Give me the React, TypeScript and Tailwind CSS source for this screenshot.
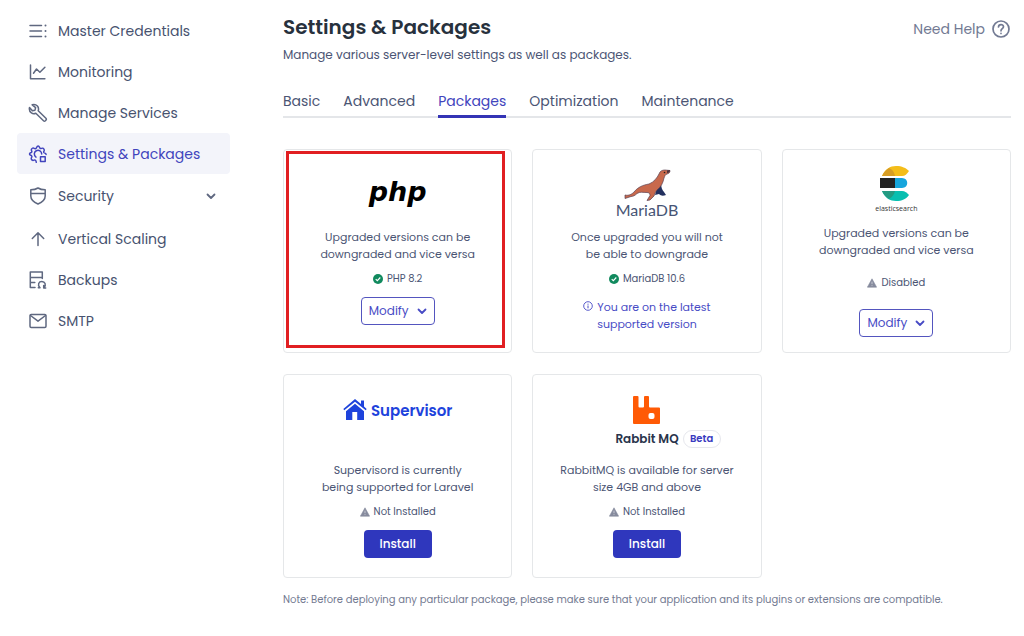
import type { ReactNode } from "react";
import clsx from "clsx";

const navItems = [
  { label: "Master Credentials", icon: <ListIcon /> },
  { label: "Monitoring", icon: <ChartIcon /> },
  { label: "Manage Services", icon: <WrenchIcon /> },
  { label: "Settings & Packages", icon: <GearIcon />, active: true },
  { label: "Security", icon: <ShieldIcon />, expandable: true },
  { label: "Vertical Scaling", icon: <ArrowUpIcon /> },
  { label: "Backups", icon: <BackupIcon /> },
  { label: "SMTP", icon: <MailIcon /> },
];

const tabs = ["Basic", "Advanced", "Packages", "Optimization", "Maintenance"];

function Icon({ children }: { children: ReactNode }) {
  return (
    <svg
      className="size-5 shrink-0"
      viewBox="0 0 20 20"
      fill="none"
      stroke="currentColor"
      strokeWidth="1.5"
      strokeLinecap="round"
      strokeLinejoin="round"
      aria-hidden="true"
    >
      {children}
    </svg>
  );
}

function ListIcon() {
  return (
    <Icon>
      <path d="M2 4.5h11.5M2 10h11.5M2 15.5h11.5" />
      <path d="M17.5 4.4v.2M17.5 9.900v.2M17.5 15.400v.2" strokeWidth="2" />
    </Icon>
  );
}

function ChartIcon() {
  return (
    <Icon>
      <path d="M2.5 3v13.7h14.4M5.5 11.2l3-4.2 3.400 3.200 5-5" />
    </Icon>
  );
}

function WrenchIcon() {
  return (
    <Icon>
      <path d="M4.200 1.800 7.600 4.600 7 7.200l-2.600.6L1.500 4.500c-.5 2.300.2 4.300 1.900 5.400 1.400.9 3 .9 4.400.3l7.700 7.600c.6.6 1.400.5 1.900 0l.6-.7c.5-.6.4-1.300-.1-1.800l-7.700-7.500c.6-1.600.4-3.300-.8-4.700-1.300-1.400-3.200-1.900-5.200-1.300Z" />
    </Icon>
  );
}

function GearIcon() {
  return (
    <Icon>
      <path d="M8.300 18.300c-.2-1.400-.2-1.800-1-2.200-1-.5-1.500.5-2.500.3-1-.3-1.800-1.300-1.500-2.300.2-.8.9-1.200.5-2.100-.4-1-2.300-.5-2.300-2s1.900-1 2.300-2c.4-.9-.8-1.500-.4-2.600.5-1.200 1.800-1.700 2.800-1.100.6.4 1 .5 1.700.2C9 4 8.500 2 10.100 2s1.100 2 2.200 2.500c.9.400 1.500-.7 2.600-.3 1.200.5 1.700 1.800 1.100 2.800-.4.600-.4 1-.2 1.500.4.900 2.300.4 2.300 2" />
      <path d="M8 13.100a3.700 3.700 0 1 1 5.700-3" />
      <path d="M12.500 12.800h4.700v4.700h-4.700z" />
    </Icon>
  );
}

function ShieldIcon() {
  return (
    <Icon>
      <path d="M10 2c2 1.300 4.400 1.800 7.200 1.800v6.100c0 3.800-3.100 6.300-7.200 8.100-4.100-1.800-7.200-4.300-7.200-8.100V3.800C5.600 3.800 8 3.300 10 2ZM2.800 7.600h14.400" />
    </Icon>
  );
}

function ArrowUpIcon() {
  return (
    <Icon>
      <path d="M10 16.500V4M4.300 9.500 10 3.800l5.700 5.700" />
    </Icon>
  );
}

function BackupIcon() {
  return (
    <Icon>
      <path d="M2.300 2h12v5.500h-12zM2.300 7.500v10H7M2.300 12.500h4.500M14.300 7.500v1" />
      <path d="M10.300 17.800h1.700c-3-3.200-1.100-6.300 1.900-6.300s4.800 3.300 2 6.300M15.700 15.600v2.400h2" />
    </Icon>
  );
}

function MailIcon() {
  return (
    <Icon>
      <rect x="2" y="3.600" width="16" height="12.800" rx="1.200" />
      <path d="m2.500 4.500 7.500 5.700 7.500-5.700" />
    </Icon>
  );
}

function Chevron() {
  return (
    <svg className="size-2.5" viewBox="0 0 10 10" fill="none" stroke="currentColor" strokeWidth="1.8" strokeLinecap="round" strokeLinejoin="round" aria-hidden="true">
      <path d="m1.500 3.500 3.500 3.500 3.500-3.500" />
    </svg>
  );
}

function HelpIcon() {
  return (
    <Icon>
      <circle cx="10" cy="10" r="8" strokeWidth="1.7" />
      <path d="M7.500 8c.1-3.300 5-3.100 5-.2 0 1.900-2.500 1.900-2.500 4M10 14.400v.1" strokeWidth="1.7" />
    </Icon>
  );
}

function CheckBadge() {
  return (
    <svg className="size-2.5" viewBox="0 0 10 10" aria-hidden="true">
      <circle cx="5" cy="5" r="5" fill="#118a5e" />
      <path d="m2.700 5.200 1.600 1.500 3-3.200" fill="none" stroke="#fff" strokeWidth="1.1" />
    </svg>
  );
}

function WarningIcon() {
  return (
    <svg className="size-2.5" viewBox="0 0 10 10" aria-hidden="true">
      <path d="M5 .8 9.600 9.200H.4z" fill="#868b9d" stroke="#868b9d" strokeWidth=".6" strokeLinejoin="round" />
      <path d="M5 3.600v2.600M5 7.200v.9" stroke="#d5d7de" strokeWidth=".8" />
    </svg>
  );
}

function InfoIcon() {
  return (
    <svg className="mr-1 inline size-2.5 align-baseline" viewBox="0 0 10 10" fill="none" stroke="currentColor" aria-hidden="true">
      <circle cx="5" cy="5" r="4.3" strokeWidth=".9" />
      <path d="M5 4.500v2.800M5 2.700v1" strokeWidth="1" />
    </svg>
  );
}

function MariaLogo() {
  return (
    <div className="flex flex-col items-center">
      <svg className="h-8 w-12" viewBox="0 0 48 32" aria-hidden="true">
        <path d="M38 13c0 5 1 8 3 10l2 3c-3 1-5 1-7-1l-4 1 2-7z" fill="#23305f" />
        <path
          d="M2 26c4 1 7-1 9-3 4-5 9-7 15-8 5-2 8-6 10-10 1-3 3-4 6-4l5 .500c0 2-1 3-3 3.500-2 .500-2 2-3 4-1 5-3 9-7 12-2 2-2 4-3 6l-4 4-3 .500 3-5c0-2-1-3-3-3-4 0-7-1-10 1-2 2-4 3-6 3l-6 2z"
          fill="#c8694c"
          stroke="#593f50"
          strokeWidth=".7"
          strokeLinejoin="round"
        />
        <path d="m44 1.500 3-.5c0 2-1 3-3 3z" fill="#4a3440" />
        <circle cx="41.500" cy="3.500" r=".8" fill="#222" />
      </svg>
      <span className="font-['Lato'] text-base leading-[18px] text-[#465474]">MariaDB</span>
    </div>
  );
}

function ElasticLogo() {
  return (
    <div className="flex flex-col items-center">
      <svg className="h-9 w-8" viewBox="0 0 32 36" aria-hidden="true">
        <path d="M2 11C5 4 10 1 16 1c6 0 10 2 13 5-2 3-4 5-7 5z" fill="#f4bd19" />
        <path d="M2 11c2-4 4-6 7-8 4 2 5 4 6 8z" fill="#d79d24" />
        <path d="M0 13h16v10H0z" fill="#232323" />
        <path d="M15 13h7c7 0 7 10 0 10h-7z" fill="#16a5dc" />
        <path d="M2 26h20c3 0 5 2 7 4-3 4-7 6-13 6S5 33 2 26z" fill="#08bfb0" />
        <path d="M2 26h13c-1 4-3 6-6 8-3-2-5-4-7-8z" fill="#249a82" />
      </svg>
      <span className="mt-1 font-['Open_Sans'] text-[7px] leading-2 text-[#333]">elasticsearch</span>
    </div>
  );
}

function SupervisorLogo() {
  return (
    <div className="flex items-center gap-1 text-[#1e43dc]">
      <svg className="h-[22px] w-6" viewBox="0 0 24 22" fill="currentColor" aria-hidden="true">
        <path d="M12 4.800 3 12.200V21h6.300v-8h4.900v8H21v-8.800z" />
        <path d="M12 0 .3 10l1 1.200L12 2.700l10.700 8.500 1-1.200-2.700-2.400V1.500h-3v3.600z" />
      </svg>
      <span className="text-[15px] font-semibold">Supervisor</span>
    </div>
  );
}

function RabbitLogo() {
  return (
    <div className="flex flex-col items-center">
      <svg className="h-7 w-[27px]" viewBox="0 0 27 28" aria-hidden="true">
        <path d="M1 0h3.500q1 0 1 1v9.500q0 1 1 1h3.500q1 0 1-1V1q0-1 1-1H15q1 0 1 1v9.500q0 1 1 1h9q1 0 1 1V27q0 1-1 1H1q-1 0-1-1V1q0-1 1-1z" fill="#ff5a05" />
        <rect x="15.500" y="17" width="6" height="6" rx="2" fill="#fff" />
      </svg>
      {/* empty left column keeps the name centred under the logo */}
      <div className="mt-1.5 grid grid-cols-[38px_auto_38px] items-center gap-1 text-[#29344b]">
        <span />
        <span className="text-xs font-semibold">Rabbit MQ</span>
        <span className="rounded-full border border-[#e6e7ed] text-center text-[10px] leading-4 font-semibold text-[#393abf]">Beta</span>
      </div>
    </div>
  );
}

function Status({ children, ok }: { children: ReactNode; ok?: boolean }) {
  return (
    <p className="flex items-center gap-1 text-[10px] leading-4">
      {ok ? <CheckBadge /> : <WarningIcon />}
      {children}
    </p>
  );
}

function ModifyButton() {
  return (
    <button type="button" className="flex h-7 items-center gap-2 rounded-sm border border-[#5355bf] px-[7px] text-xs text-[#484bc5]">
      Modify
      <Chevron />
    </button>
  );
}

function InstallButton() {
  return (
    <button type="button" className="h-7 rounded-sm bg-[#2f37bd] px-4 text-xs font-medium text-white">
      Install
    </button>
  );
}

function Card({ children }: { children: ReactNode }) {
  return (
    <article className="relative flex min-h-[204px] flex-col items-center rounded-sm border border-[#e5e7e9] text-center text-[11px] leading-[17px]">
      {children}
    </article>
  );
}

export default function App() {
  return (
    <div className="flex bg-white font-['Poppins','Inter',sans-serif] text-[#4b5574]">
      <nav className="mt-2.5 ml-[17px] w-[213px] shrink-0">
        {navItems.map((item) => (
          <a
            key={item.label}
            href="#"
            className={clsx(
              "flex items-center gap-2.5 rounded-sm pr-3.5 pl-[11px] text-sm",
              item.expandable ? "h-11" : "h-[41px]",
              item.active ? "bg-[#f3f4fa] text-[#4144bd]" : "text-[#5f6880]",
            )}
          >
            {item.icon}
            <span className={clsx("flex-1", !item.active && "text-[#47526f]")}>{item.label}</span>
            {item.expandable && <Chevron />}
          </a>
        ))}
      </nav>

      <main className="mr-[13px] ml-[53px] min-w-0 flex-1 pt-3">
        <header className="flex items-start justify-between">
          <div>
            <h1 className="text-xl leading-[30px] font-semibold text-[#27313d]">Settings &amp; Packages</h1>
            <p className="mt-1 text-xs leading-[18px]">Manage various server-level settings as well as packages.</p>
          </div>
          <a href="#" className="mt-[7px] flex items-center gap-1.5 text-sm text-[#727a93]">
            Need Help
            <HelpIcon />
          </a>
        </header>

        <div role="tablist" className="mt-[26px] flex gap-[23px] border-b-2 border-[#e4e6e9] text-sm leading-[22px]">
          {tabs.map((tab) => (
            <button
              key={tab}
              type="button"
              role="tab"
              aria-selected={tab === "Packages"}
              className={clsx("-mb-0.5 border-b-3 pb-[3px]", tab === "Packages" ? "border-[#3434b5] text-[#4144bd]" : "border-transparent")}
            >
              {tab}
            </button>
          ))}
        </div>

        <section className="mt-[31px] grid grid-cols-3 gap-x-5 gap-y-[21px]">
          <Card>
            <div className="flex h-[79px] items-center pt-1">
              <span className="font-['DejaVu_Sans'] text-[27px] font-bold text-black italic">php</span>
            </div>
            <p>
              Upgraded versions can be
              <br />
              downgraded and vice versa
            </p>
            <div className="mt-2 mb-2.5">
              <Status ok>PHP 8.2</Status>
            </div>
            <ModifyButton />
            <div className="pointer-events-none absolute top-px right-1.5 bottom-1 left-0.5 border-3 border-[#e11f22]" />
          </Card>

          <Card>
            <div className="h-[79px] pt-[19px]">
              <MariaLogo />
            </div>
            <p>
              Once upgraded you will not
              <br />
              be able to downgrade
            </p>
            <div className="mt-2 mb-3">
              <Status ok>MariaDB 10.6</Status>
            </div>
            <p className="text-[#484bc5]">
              <InfoIcon />
              You are on the latest
              <br />
              supported version
            </p>
          </Card>

          <Card>
            <div className="h-[75px] pt-[15px]">
              <ElasticLogo />
            </div>
            <p>
              Upgraded versions can be
              <br />
              downgraded and vice versa
            </p>
            <div className="mt-4 mb-[18px]">
              <Status>Disabled</Status>
            </div>
            <ModifyButton />
          </Card>

          <Card>
            <div className="h-[87px] pt-6">
              <SupervisorLogo />
            </div>
            <p>
              Supervisord is currently
              <br />
              being supported for Laravel
            </p>
            <div className="mt-2 mb-2.5">
              <Status>Not Installed</Status>
            </div>
            <InstallButton />
          </Card>

          <Card>
            <div className="h-[87px] pt-[21px]">
              <RabbitLogo />
            </div>
            <p>
              RabbitMQ is available for server
              <br />
              size 4GB and above
            </p>
            <div className="mt-2 mb-2.5">
              <Status>Not Installed</Status>
            </div>
            <InstallButton />
          </Card>
        </section>

        <p className="mt-3.5 text-[10px] leading-4 text-[#737a91]">
          Note: Before deploying any particular package, please make sure that your application and its plugins or extensions are compatible.
        </p>
      </main>
    </div>
  );
}
